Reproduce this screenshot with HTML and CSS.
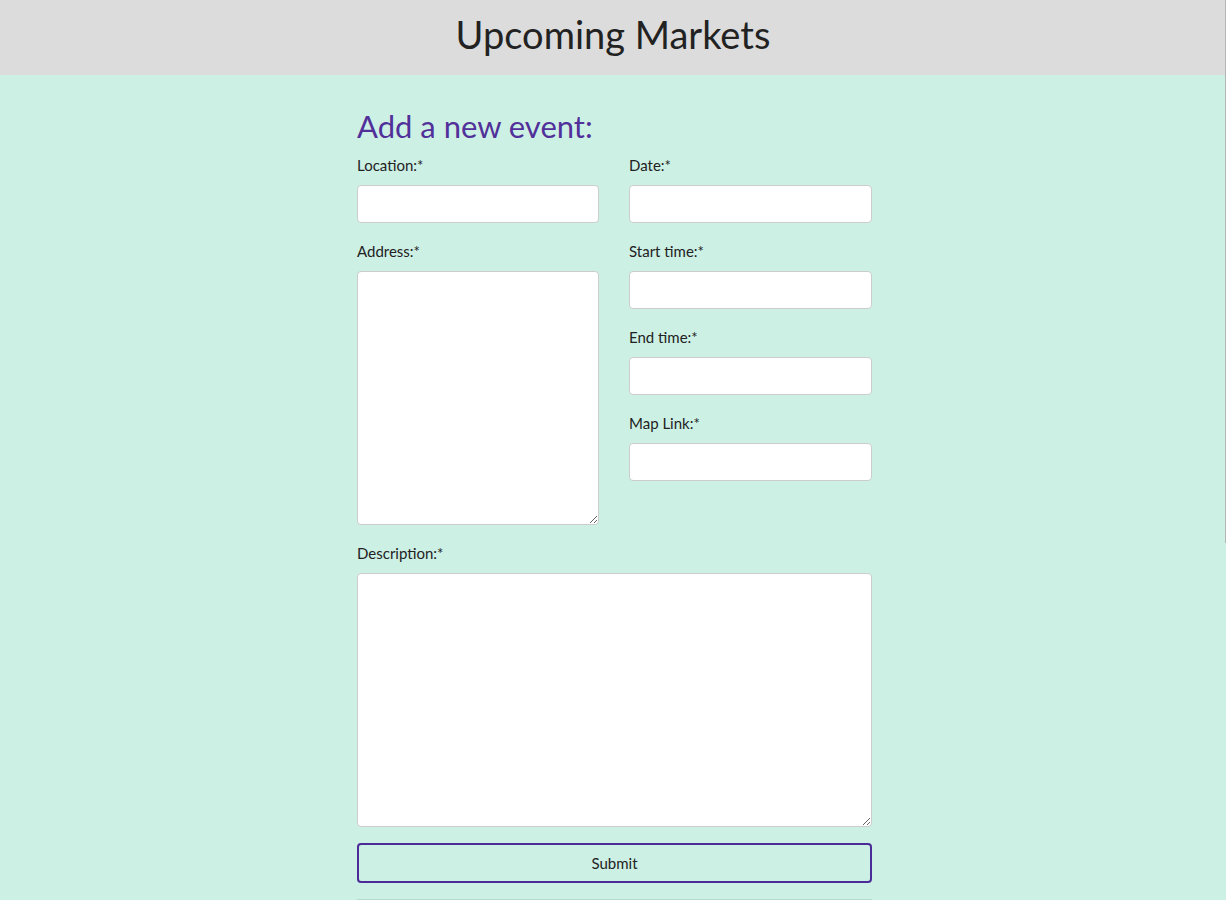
FILE: index.html
```html
<!DOCTYPE html>
<html lang="en">
<head>
<meta charset="utf-8">
<title>Upcoming Markets</title>
<link rel="stylesheet" href="styles.css">
</head>
<body>
<header class="site-header">
  <h1 class="site-title">Upcoming Markets</h1>
</header>
<main class="page">
  <form class="event-form">
    <h2 class="form-title">Add a new event:</h2>
    <div class="grid">
      <div class="col">
        <div class="field">
          <label class="label" for="location">Location:*</label>
          <input class="input" id="location" type="text">
        </div>
        <div class="field">
          <label class="label" for="address">Address:*</label>
          <textarea class="input area" id="address"></textarea>
        </div>
      </div>
      <div class="col">
        <div class="field">
          <label class="label" for="date">Date:*</label>
          <input class="input" id="date" type="text">
        </div>
        <div class="field">
          <label class="label" for="start">Start time:*</label>
          <input class="input" id="start" type="text">
        </div>
        <div class="field">
          <label class="label" for="end">End time:*</label>
          <input class="input" id="end" type="text">
        </div>
        <div class="field">
          <label class="label" for="map">Map Link:*</label>
          <input class="input" id="map" type="text">
        </div>
      </div>
    </div>
    <div class="field">
      <label class="label" for="desc">Description:*</label>
      <textarea class="input area" id="desc"></textarea>
    </div>
    <button class="submit" type="button">Submit</button>
    <div class="rule"></div>
  </form>
</main>
<div class="scroll-thumb"></div>
</body>
</html>
```

FILE: styles.css
```css
* { box-sizing: border-box; }
html, body { margin: 0; padding: 0; }
body {
  background: #cdf0e5;
  font-family: Lato, "Open Sans", sans-serif;
  color: #222;
  height: 900px;
  overflow: hidden;
}
.site-header {
  background: #dcdcdc;
  height: 75px;
  display: flex;
  align-items: center;
  justify-content: center;
}
.site-title {
  margin: 0;
  font-weight: 400;
  font-size: 38px;
  line-height: 1;
  color: #222;
  padding-bottom: 8px;
}
.page {
  display: flex;
  justify-content: center;
}
.event-form {
  width: 515px;
  margin-left: 3px;
  padding-top: 33px;
}
.form-title {
  margin: 0 0 9px;
  font-weight: 400;
  font-size: 31px;
  line-height: 36px;
  color: #51309a;
  padding-bottom: 2px;
}
.grid {
  display: grid;
  grid-template-columns: 242px 243px;
  column-gap: 30px;
}
.field {
  display: flex;
  flex-direction: column;
  margin-bottom: 18px;
}
.label {
  font-size: 15px;
  line-height: 20px;
  margin-bottom: 10px;
}
.input {
  height: 38px;
  background: #fff;
  border: 1px solid #cccccc;
  border-radius: 4px;
  font: inherit;
  padding: 6px 10px;
  margin: 0;
}
.area {
  height: 254px;
  resize: vertical;
}
.submit {
  display: block;
  width: 100%;
  height: 40px;
  margin-top: -2px;
  background: transparent;
  border: 2px solid #4b2b98;
  border-radius: 4px;
  font-family: Lato, "Open Sans", sans-serif;
  font-size: 15px;
  color: #222;
}
.rule {
  margin-top: 16px;
  border-top: 1px solid #b3d9cb;
}
.scroll-thumb {
  position: fixed;
  top: 0;
  right: 0;
  width: 1px;
  height: 543px;
  background: #b5b5b5;
}
```
